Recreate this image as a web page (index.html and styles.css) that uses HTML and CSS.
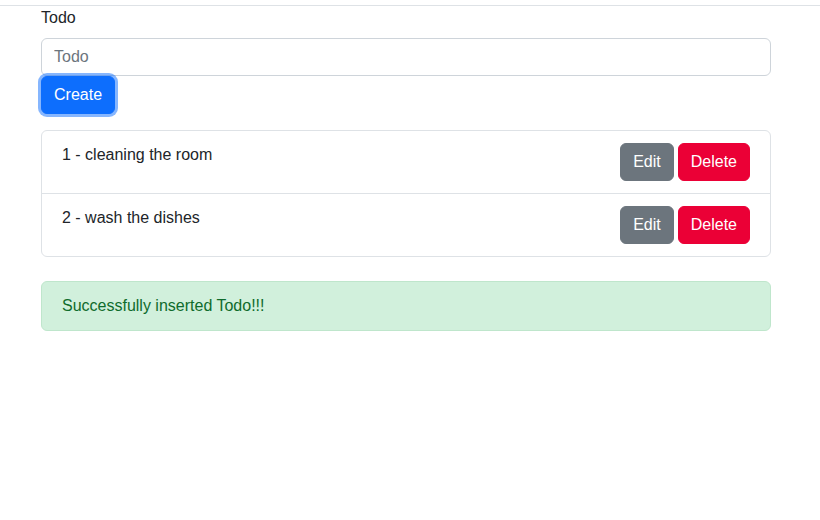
FILE: index.html
```html
<!DOCTYPE html>
<html>
<head>
<meta charset="utf-8">
<link rel="stylesheet" href="styles.css">
</head>
<body>
<div class="topline"></div>
<main class="container">
  <label class="form-label" for="todo">Todo</label>
  <input id="todo" class="form-control" type="text" placeholder="Todo">
  <button class="btn btn-primary focused">Create</button>
  <ul class="list-group">
    <li class="list-item">
      <span class="item-text">1 - cleaning the room</span>
      <div class="actions">
        <button class="btn btn-secondary">Edit</button>
        <button class="btn btn-danger">Delete</button>
      </div>
    </li>
    <li class="list-item">
      <span class="item-text">2 - wash the dishes</span>
      <div class="actions">
        <button class="btn btn-secondary">Edit</button>
        <button class="btn btn-danger">Delete</button>
      </div>
    </li>
  </ul>
  <div class="alert">Successfully inserted Todo!!!</div>
</main>
</body>
</html>
```
FILE: styles.css
```css
* { box-sizing: border-box; }
html, body { margin: 0; padding: 0; background: #fff; }
body {
  font-family: "Liberation Sans", Arial, sans-serif;
  font-size: 16px;
  line-height: 24px;
  color: #212529;
  padding-top: 5px;
}
.topline { height: 1px; background: #dee2e6; }
.container {
  width: 730px;
  margin-left: 41px;
  display: flex;
  flex-direction: column;
  align-items: flex-start;
}
.form-label { display: block; margin-bottom: 8px; }
.form-control {
  width: 100%;
  height: 38px;
  padding: 6px 12px;
  font: inherit;
  color: #212529;
  border: 1px solid #ced4da;
  border-radius: 6px;
  outline: none;
}
.form-control::placeholder { color: #6c757d; }
.btn {
  font: inherit;
  height: 38px;
  padding: 6px 12px;
  border: 1px solid transparent;
  border-radius: 6px;
  color: #fff;
  cursor: pointer;
}
.btn-primary { background: #0d6efd; border-color: #0d6efd; }
.focused { box-shadow: 0 0 0 3px rgba(13,110,253,.5); }
.btn-secondary { background: #6c757d; border-color: #6c757d; }
.btn-danger { background: #eb0036; border-color: #eb0036; }
.list-group {
  list-style: none;
  margin: 16px 0 0;
  padding: 0;
  width: 100%;
  border: 1px solid #dee2e6;
  border-radius: 6px;
}
.list-item {
  display: flex;
  justify-content: space-between;
  align-items: flex-start;
  padding: 12px 20px;
}
.list-item + .list-item { border-top: 1px solid #dee2e6; }
.item-text { padding-top: 0; }
.actions { display: flex; gap: 4px; }
.alert {
  width: 100%;
  margin-top: 24px;
  padding: 12px 20px;
  background: #d1f0dc;
  border: 1px solid #bfe6cc;
  border-radius: 6px;
  color: #0f6b2c;
}
```
